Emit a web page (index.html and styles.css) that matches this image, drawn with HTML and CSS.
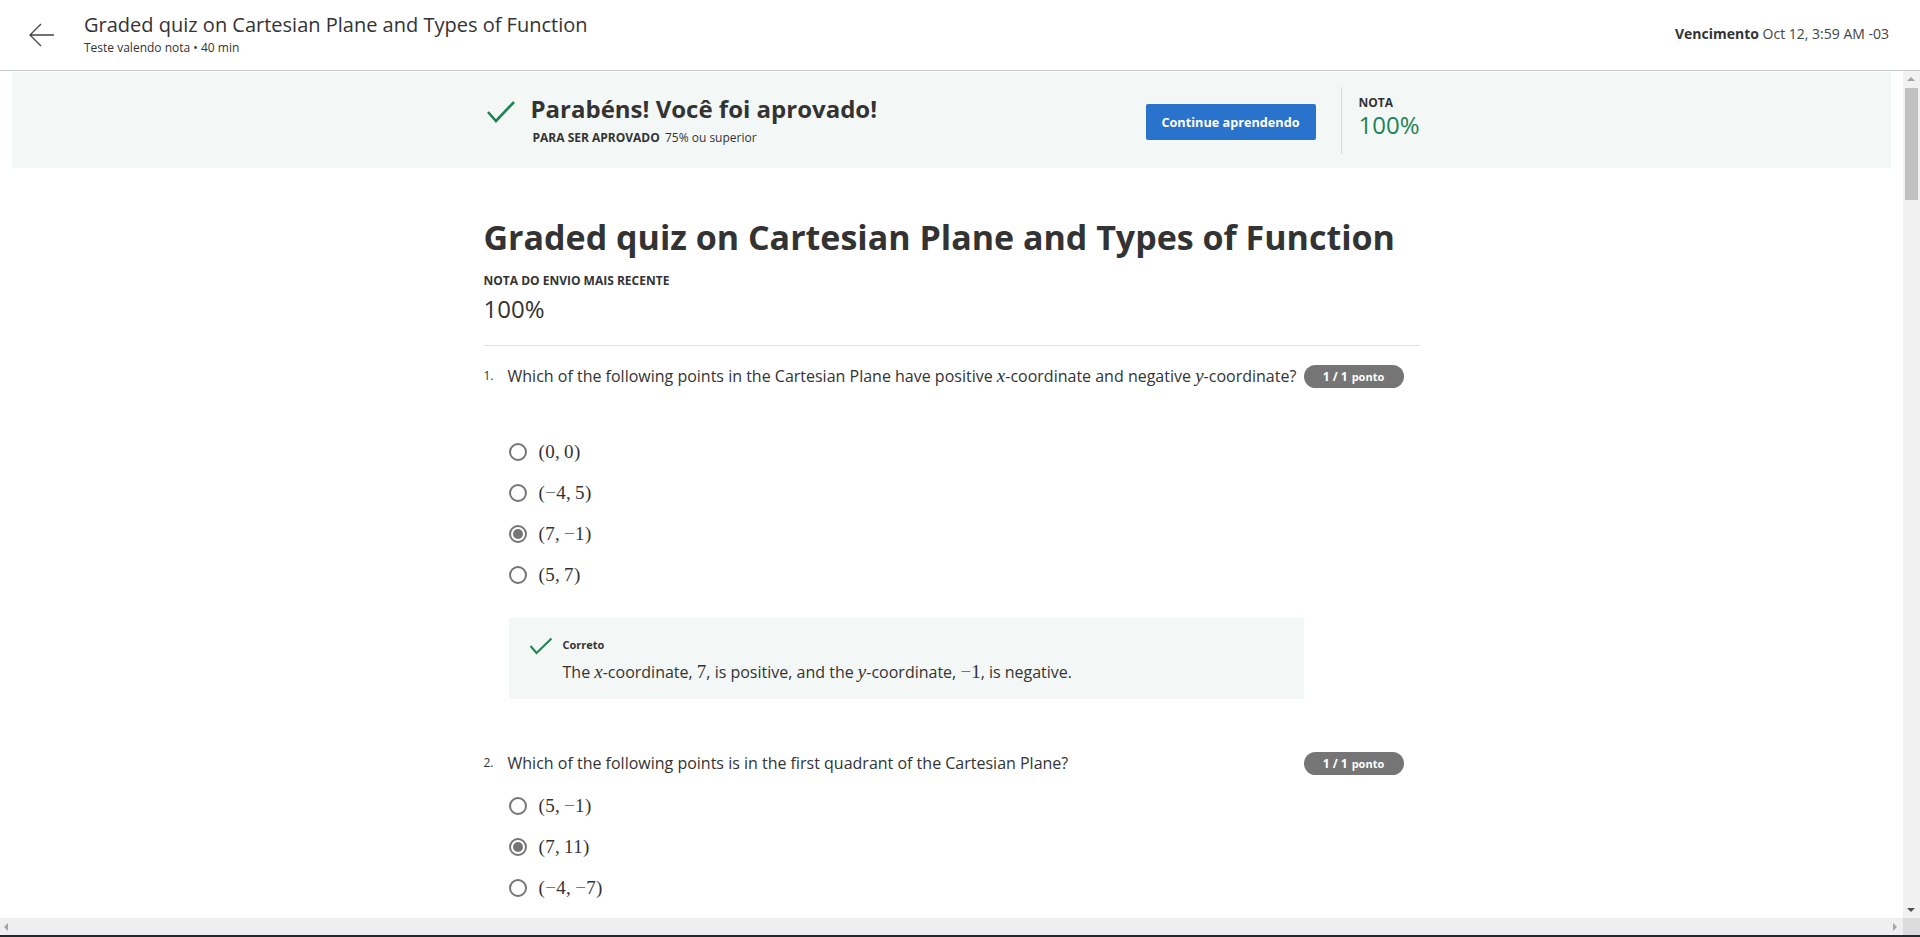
FILE: index.html
```html
<!DOCTYPE html>
<html lang="pt">
<head>
<meta charset="utf-8">
<title>Graded quiz on Cartesian Plane and Types of Function</title>
<link rel="stylesheet" href="styles.css">
</head>
<body>
<div class="app">
  <header class="topbar">
    <svg class="back" width="28" height="26" viewBox="0 0 28 26"><path d="M2 13 H26 M13 2 L2 13 L13 24" fill="none" stroke="#444" stroke-width="1.3"/></svg>
    <div class="topbar-titles">
      <div class="topbar-title">Graded quiz on Cartesian Plane and Types of Function</div>
      <div class="topbar-sub">Teste valendo nota • 40 min</div>
    </div>
    <div class="due"><b>Vencimento</b> Oct 12, 3:59 AM -03</div>
  </header>

  <div class="viewport">
    <div class="scroll-row">
      <div class="scroll-content">
        <section class="banner">
          <div class="banner-inner">
            <svg class="banner-check" width="30" height="24" viewBox="0 0 30 24"><path d="M2 12 L10 21 L28 2" fill="none" stroke="#1f8354" stroke-width="2.6"/></svg>
            <div class="banner-text">
              <div class="banner-title">Parabéns! Você foi aprovado!</div>
              <div class="banner-sub"><b>PARA SER APROVADO</b> 75% ou superior</div>
            </div>
            <button class="btn-primary">Continue aprendendo</button>
            <div class="banner-divider"></div>
            <div class="banner-grade">
              <div class="grade-label">NOTA</div>
              <div class="grade-value">100%</div>
            </div>
          </div>
        </section>

        <main class="content">
          <h1 class="quiz-title">Graded quiz on Cartesian Plane and Types of Function</h1>
          <div class="recent-label">NOTA DO ENVIO MAIS RECENTE</div>
          <div class="recent-value">100%</div>
          <hr class="sep">

          <div class="question">
            <div class="q-num">1.</div>
            <div class="q-body">
              <div class="q-text">Which of the following points in the Cartesian Plane have positive <i class="m">x</i>-coordinate and negative <i class="m">y</i>-coordinate?</div>
              <div class="q-spacer"></div>
              <div class="options">
                <div class="option"><span class="radio"></span><span class="math">(0,&thinsp;0)</span></div>
                <div class="option"><span class="radio"></span><span class="math">(<span class="minus">−</span>4,&thinsp;5)</span></div>
                <div class="option"><span class="radio checked"></span><span class="math">(7,&thinsp;<span class="minus">−</span>1)</span></div>
                <div class="option"><span class="radio"></span><span class="math">(5,&thinsp;7)</span></div>
              </div>
              <div class="feedback">
                <svg class="fb-check" width="24" height="18" viewBox="0 0 24 18"><path d="M1.5 9 L7.5 16 L22.5 1.5" fill="none" stroke="#1f8354" stroke-width="2"/></svg>
                <div class="fb-text">
                  <div class="fb-title">Correto</div>
                  <div class="fb-body">The <i class="m">x</i>-coordinate, <span class="mr">7</span>, is positive, and the <i class="m">y</i>-coordinate, <span class="mr"><span class="minus">−</span>1</span>, is negative.</div>
                </div>
              </div>
            </div>
            <div class="q-score"><span class="badge">1 / 1 <span class="badge-small">ponto</span></span></div>
          </div>

          <div class="question q2">
            <div class="q-num">2.</div>
            <div class="q-body">
              <div class="q-text">Which of the following points is in the first quadrant of the Cartesian Plane?</div>
              <div class="options">
                <div class="option"><span class="radio"></span><span class="math">(5,&thinsp;<span class="minus">−</span>1)</span></div>
                <div class="option"><span class="radio checked"></span><span class="math">(7,&thinsp;11)</span></div>
                <div class="option"><span class="radio"></span><span class="math">(<span class="minus">−</span>4,&thinsp;<span class="minus">−</span>7)</span></div>
                <div class="option"><span class="radio"></span><span class="math">(0,&thinsp;1)</span></div>
              </div>
            </div>
            <div class="q-score"><span class="badge">1 / 1 <span class="badge-small">ponto</span></span></div>
          </div>
        </main>
      </div>
      <div class="vscroll">
        <div class="arrow-up"></div>
        <div class="vtrack"><div class="vthumb"></div></div>
        <div class="arrow-down"></div>
      </div>
    </div>
    <div class="hscroll-row">
      <div class="hscroll">
        <div class="arrow-left"></div>
        <div class="arrow-right"></div>
      </div>
      <div class="corner"></div>
    </div>
  </div>
  <div class="edge"></div>
</div>
</body>
</html>
```

FILE: styles.css
```css
* { box-sizing: border-box; }
html, body { margin: 0; padding: 0; height: 100%; }
body {
  font-family: "Open Sans", "Liberation Sans", sans-serif;
  color: #1f1f1f;
  background: #fff;
  overflow: hidden;
}
.app { display: flex; flex-direction: column; height: 937px; }

/* top bar */
.topbar {
  flex: none;
  height: 71px;
  border-bottom: 1px solid #c8c8c8;
  display: flex;
  align-items: flex-start;
  padding: 0 31px 0 28px;
}
.back { margin-top: 22px; margin-right: 28px; flex: none; }
.topbar-titles { flex: 1; padding-top: 11px; }
.topbar-title { font-size: 20px; line-height: 27px; color: #333; }
.topbar-sub { font-size: 12px; line-height: 16px; color: #333; margin-top: 2px; }
.due { font-size: 14px; line-height: 20px; color: #444; padding-top: 24px; }
.due b { font-weight: 700; color: #333; }

/* viewport with scrollbars */
.viewport { flex: 1; display: flex; flex-direction: column; min-height: 0; }
.scroll-row { flex: 1; display: flex; min-height: 0; }
.scroll-content { flex: 1; overflow: hidden; min-width: 0; }
.vscroll { width: 17px; flex: none; background: #f1f1f1; display: flex; flex-direction: column; }
.arrow-up, .arrow-down { height: 17px; flex: none; position: relative; }
.arrow-up::after {
  content: ""; position: absolute; left: 4px; top: 6px;
  border-left: 4px solid transparent; border-right: 4px solid transparent;
  border-bottom: 4px solid #a3a3a3;
}
.arrow-down::after {
  content: ""; position: absolute; left: 4px; top: 7px;
  border-left: 4px solid transparent; border-right: 4px solid transparent;
  border-top: 4px solid #505050;
}
.vtrack { flex: 1; padding: 0 2px; }
.vthumb { height: 112px; background: #c1c1c1; }
.hscroll-row { height: 17px; flex: none; display: flex; }
.hscroll { flex: 1; background: #efefef; display: flex; justify-content: space-between; align-items: center; padding: 0 4px; }
.arrow-left { border-top: 4px solid transparent; border-bottom: 4px solid transparent; border-right: 4px solid #a3a3a3; }
.arrow-right { border-top: 4px solid transparent; border-bottom: 4px solid transparent; border-left: 4px solid #a3a3a3; margin-right: 2px; }
.corner { width: 17px; background: #dcdcdc; }
.edge { height: 2px; flex: none; background: #1c2b36; }

/* banner */
.banner { margin: 1px 12px 0; height: 96px; background: #f3f8f6; }
.banner-inner { width: 936px; margin: 0 auto; height: 100%; display: flex; align-items: center; }
.banner-check { flex: none; margin-left: 2px; margin-right: 15px; margin-top: -16px; }
.banner-text { flex: 1; }
.banner-title { font-size: 24px; line-height: 30px; font-weight: 700; color: #333; }
.banner-sub { font-size: 12px; line-height: 16px; color: #333; margin-top: 6px; padding-left: 2px; }
.banner-sub b { font-weight: 700; margin-right: 2px; }
.btn-primary {
  flex: none;
  width: 170px; height: 36px;
  margin-top: 4px;
  background: #2a73cc; color: #fff;
  border: none; border-radius: 2px;
  font-family: "Open Sans", "Liberation Sans", sans-serif;
  font-size: 12.7px; font-weight: 700;
}
.banner-divider { flex: none; width: 1px; height: 67px; background: #dadada; margin: 0 17px 0 25px; }
.banner-grade { flex: none; width: 61px; margin-top: -4px; }
.grade-label { font-size: 12px; line-height: 14px; font-weight: 700; color: #333; }
.grade-value { font-size: 24px; line-height: 30px; color: #1f8354; }

/* content */
.content { width: 936px; margin: 0 auto; padding-top: 46px; }
.quiz-title { margin: 0; font-size: 34px; line-height: 46px; font-weight: 700; color: #333; }
.recent-label { margin-top: 13px; font-size: 12px; line-height: 16px; font-weight: 700; color: #333; }
.recent-value { margin-top: 5px; font-size: 24px; line-height: 30px; color: #333; }
.sep { border: none; border-top: 1px solid #e1e1e1; margin: 21px 0 0; }

.question { display: flex; margin-top: 18px; }
.q2 { margin-top: 52px; }
.q-num { width: 24px; flex: none; font-size: 12px; line-height: 24px; color: #333; }
.q-body { flex: 1; min-width: 0; }
.q-text { font-size: 16px; line-height: 24px; color: #333; white-space: nowrap; }
.q-spacer { height: 33px; }
.q-score { width: 116px; flex: none; height: 24px; display: flex; align-items: center; }
.badge {
  display: inline-flex; align-items: center; justify-content: center;
  width: 100px; height: 23px;
  border-radius: 12px; background: #757575; color: #fff;
  font-size: 12px; font-weight: 700;
}
.badge-small { font-size: 11px; margin-left: 4px; }

.m { font-family: "Liberation Serif", "Times New Roman", serif; font-style: italic; font-size: 19px; line-height: 1; }
.mr { font-family: "Liberation Serif", "Times New Roman", serif; font-size: 19px; line-height: 1; }
.minus { color: #777; }

.options { margin-top: 10px; }
.option { display: flex; align-items: center; height: 41px; padding-left: 1px; }
.radio {
  width: 18px; height: 18px; flex: none;
  border: 2px solid #757575; border-radius: 50%;
  margin-right: 12px;
  display: flex; align-items: center; justify-content: center;
}
.radio.checked::after { content: ""; width: 10px; height: 10px; border-radius: 50%; background: #757575; }
.math { font-family: "Liberation Serif", "Times New Roman", serif; font-size: 19px; color: #333; letter-spacing: 0.3px; }

.feedback {
  margin: 23px 0 0 1px;
  height: 81px;
  background: #f3f8f6;
  display: flex;
  padding: 19px 20px 0 20px;
}
.fb-check { flex: none; margin-right: 10px; }
.fb-title { font-size: 11px; line-height: 14px; font-weight: 700; color: #333; margin-top: 1px; }
.fb-body { font-size: 16px; line-height: 24px; color: #333; margin-top: 8px; }
```
